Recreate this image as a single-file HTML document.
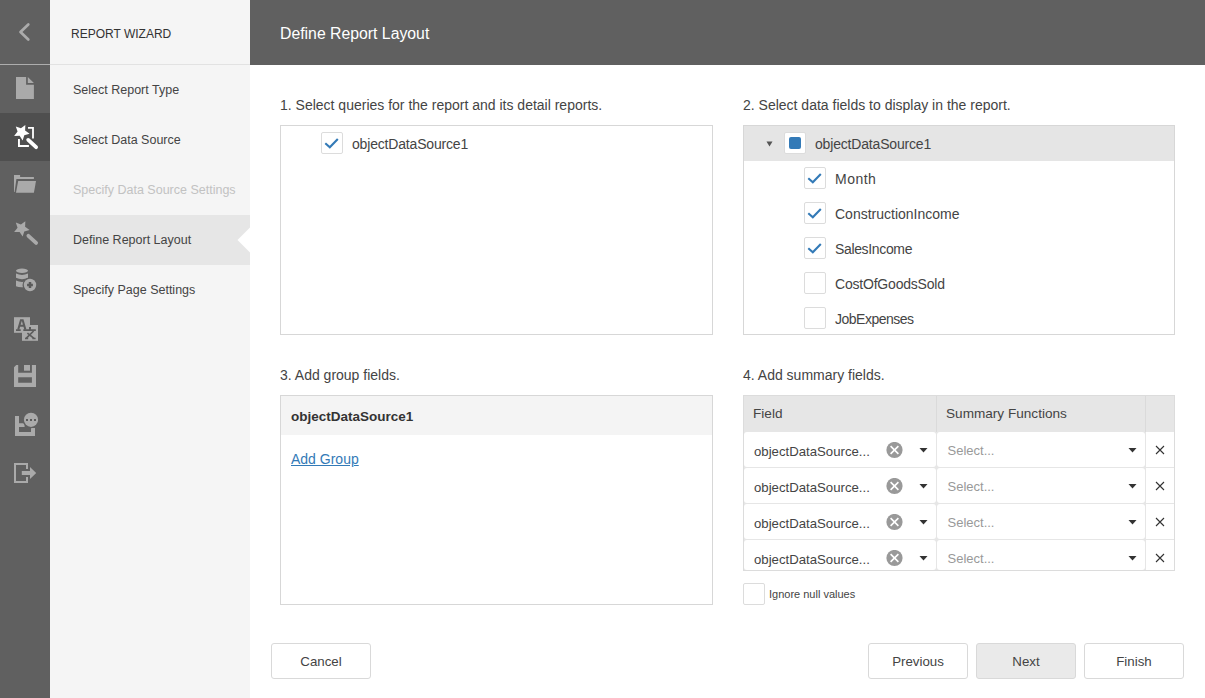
<!DOCTYPE html>
<html><head><meta charset="utf-8">
<style>
*{box-sizing:border-box;margin:0;padding:0}
html,body{width:1205px;height:698px;overflow:hidden;background:#fff;font-family:"Liberation Sans",sans-serif;color:#333}
.abs{position:absolute}
#bar{left:0;top:0;width:50px;height:698px;background:#606060}
#bar .sep{left:0;top:64px;width:50px;height:1px;background:#adadad}
#bar .act{left:0;top:113px;width:50px;height:48px;background:#4f4f4f}
#bar svg{position:absolute;left:0;top:0}
#nav{left:50px;top:0;width:200px;height:698px;background:#f5f5f5}
#nav .ttl{left:21px;top:27px;font-size:12px;line-height:14px;color:#333;white-space:nowrap}
#nav .sep{left:0;top:64px;width:200px;height:1px;background:#e2e2e2}
.item{position:absolute;left:0;width:200px;height:50px;font-size:12.5px;line-height:50px;padding-left:23px;white-space:nowrap;color:#444}
.item.dis{color:#c2c2c2}
.item.sel{background:#e6e6e6}
#hdr{left:250px;top:0;width:955px;height:65px;background:#606060}
#hdr .t{left:30px;top:25px;font-size:15.8px;line-height:18px;color:#fff;white-space:nowrap}
.lbl{position:absolute;font-size:14px;line-height:16px;color:#444;white-space:nowrap}
.box{position:absolute;border:1px solid #d7d7d7;background:#fff;overflow:hidden}
.cb{position:absolute;width:22px;height:22px;border:1px solid #dcdcdc;border-radius:2px;background:#fff}
.cb svg{position:absolute;left:-1px;top:-1px}
.txt{position:absolute;font-size:14px;line-height:16px;color:#444;white-space:nowrap}
.btn{position:absolute;top:643px;width:100px;height:36px;border:1px solid #d9d9d9;border-radius:3px;background:#fff;font-size:13.3px;text-align:center;line-height:35px;color:#444}
.row{position:absolute;left:0;width:430px;height:35px}
.tbl{position:absolute;left:743px;top:395px;width:432px;height:176px;border:1px solid #dcdcdc;background:#e6e6e6;overflow:hidden}
.th{position:absolute;top:0;height:36px;font-size:13.6px;line-height:16px;color:#444;white-space:nowrap}
.cell{position:absolute;height:35px;background:#fff;border-radius:3px}
.ctext{position:absolute;font-size:13.2px;line-height:16px;white-space:nowrap;color:#444}
</style></head><body>
<div id="bar" class="abs">
  <div class="abs sep"></div>
  <div class="abs act"></div>
  <svg width="50" height="698" viewBox="0 0 50 698">
    <!-- back chevron -->
    <path d="M28.3 24.5 L20.5 32 L28.3 39.5" fill="none" stroke="#ababab" stroke-width="2.7" stroke-linecap="round" stroke-linejoin="round"/>
    <!-- document -->
    <path d="M16 77 H26.1 V84.7 H33.9 V99 H16 Z" fill="#aaa"/>
    <path d="M27.8 77 L33.9 82.9 H27.8 Z" fill="#aaa"/>
    <!-- wizard (active) -->
    <path fill="#fff" d="M25.35 125.06 L25.10 130.55 L29.58 133.72 L24.28 135.18 L22.64 140.42 L19.62 135.83 L14.13 135.89 L17.56 131.61 L15.80 126.40 L20.94 128.34 Z"/>
    <path fill="#fff" d="M28 127 H33.9 V138.5 H32.1 V128.8 H28 Z"/>
    <path fill="#fff" d="M18 138.9 H19.9 V145 H28.9 V146.9 H18 Z"/>
    <path d="M28.2 139.9 L36.1 147.2" stroke="#fff" stroke-width="3.8" stroke-linecap="round"/>
    <!-- folder -->
    <path d="M14 175 H20.1 V177 H33.9 V178.9 H16.4 L14.6 192 H14 Z" fill="#aaa"/>
    <path d="M18.2 181 H36 L33.9 192.8 H16 Z" fill="#aaa"/>
    <!-- magic wand -->
    <path fill="#aaa" d="M25.35 221.26 L25.10 226.75 L29.58 229.92 L24.28 231.38 L22.64 236.62 L19.62 232.03 L14.13 232.09 L17.56 227.81 L15.80 222.60 L20.94 224.54 Z"/>
    <path d="M28.4 235.8 L36.1 242.9" stroke="#aaa" stroke-width="3.8" stroke-linecap="round"/>
    <!-- database add -->
    <ellipse cx="22" cy="270.8" rx="6" ry="2.2" fill="#aaa"/>
    <path d="M16 273.6 Q22 276.2 28 273.6 V277.8 Q22 280.6 16 277.8 Z" fill="#aaa"/>
    <path d="M16 280.6 Q20 282.4 24 281.8 L23.6 287.2 Q19 287.6 16 286.2 Z" fill="#aaa"/>
    <circle cx="30" cy="285" r="7.5" fill="#606060"/>
    <circle cx="30" cy="285" r="6.2" fill="#aaa"/>
    <path d="M27.1 285 H32.9 M30 282.1 V287.9" stroke="#5a5a5a" stroke-width="2.5"/>
    <!-- translate -->
    <rect x="14" y="317.2" width="16" height="15.6" fill="#aaa"/>
    <rect x="22" y="325" width="16" height="15.8" fill="#aaa"/>
    <path d="M18.2 329.6 L20.9 320.3 H22.7 L25.4 329.6 M19.5 325.8 H24.1" fill="none" stroke="#5c5c5c" stroke-width="2"/>
    <path fill="#5c5c5c" d="M16 329.2 H20.7 V330.9 H16 Z M23.3 329.2 H35.8 V330.9 H23.3 Z M29 327 H31 V329.2 H29 Z"/>
    <path d="M27.4 333.2 L34 338.4 M33.6 331 L26.1 338.4" fill="none" stroke="#5c5c5c" stroke-width="1.7"/>
    <path fill="#5c5c5c" d="M25 337.7 H28.2 V339.2 H25 Z M32.4 337.7 H35.6 V339.2 H32.4 Z"/>
    <!-- save -->
    <path fill="#aaa" fill-rule="evenodd" d="M16.3 365 H36 V387 H14 V367.3 Z M18.2 365 V372.7 H31.9 V365 Z M18.2 377.2 V382.8 H31.9 V377.2 Z"/>
    <rect x="24" y="365" width="6" height="5.7" fill="#aaa"/>
    <!-- save as / comment -->
    <path fill="#aaa" d="M15 416 H19 V423.3 H24.6 V427.1 H19 V431.9 H31 V428 H35 V436 H15 Z"/>
    <circle cx="31" cy="419.8" r="8.4" fill="#606060"/>
    <circle cx="31" cy="419.8" r="7.1" fill="#aaa"/>
    <path fill="#5a5a5a" d="M26 418.9 H28 V420.9 H26 Z M30 418.9 H32 V420.9 H30 Z M34 418.9 H36 V420.9 H34 Z"/>
    <!-- exit -->
    <path fill="#aaa" d="M14 463 H28 V469 H26 V465 H16 V481 H26 V477 H28 V483 H14 Z"/>
    <path fill="#aaa" d="M21.8 471 H30 V467 L36.2 473 L30 479 V475 H21.8 Z"/>
  </svg>
</div>
<div id="nav" class="abs">
  <div class="abs ttl">REPORT WIZARD</div>
  <div class="abs sep"></div>
  <div class="item" style="top:65px">Select Report Type</div>
  <div class="item" style="top:115px">Select Data Source</div>
  <div class="item dis" style="top:165px">Specify Data Source Settings</div>
  <div class="item sel" style="top:215px">Define Report Layout</div>
  <div class="item" style="top:265px">Specify Page Settings</div>
  <svg class="abs" style="left:187px;top:227px" width="13" height="26" viewBox="0 0 13 26"><path d="M13 0.5 L0.5 13 L13 25.5 Z" fill="#fff"/></svg>
</div>
<div id="hdr" class="abs"><div class="abs t">Define Report Layout</div></div>

<div class="lbl" style="left:280px;top:97px">1. Select queries for the report and its detail reports.</div>
<div class="box" style="left:280px;top:125px;width:433px;height:210px">
  <div class="cb" style="left:40px;top:6px"><svg width="22" height="22" viewBox="0 0 22 22"><path d="M4.3 11.3 L8.8 15.3 L16.8 7" fill="none" stroke="#337ab7" stroke-width="2.1"/></svg></div>
  <div class="txt" style="left:71px;top:10px;letter-spacing:-0.18px">objectDataSource1</div>
</div>

<div class="lbl" style="left:743px;top:97px">2. Select data fields to display in the report.</div>
<div class="box" style="left:743px;top:125px;width:432px;height:210px">
  <div class="row" style="top:0;background:#e5e5e5"></div>
  <svg class="abs" style="left:22px;top:15px" width="7" height="6" viewBox="0 0 7 6"><path d="M0.5 0.5 H6.5 L3.5 5.5 Z" fill="#555"/></svg>
  <div class="cb" style="left:40px;top:6px"><div class="abs" style="left:4px;top:4px;width:12px;height:12px;background:#337ab7;border-radius:2px"></div></div>
  <div class="txt" style="left:71px;top:10px;letter-spacing:-0.18px">objectDataSource1</div>

  <div class="cb" style="left:60px;top:41px"><svg width="22" height="22" viewBox="0 0 22 22"><path d="M4.3 11.3 L8.8 15.3 L16.8 7" fill="none" stroke="#337ab7" stroke-width="2.1"/></svg></div>
  <div class="txt" style="left:91px;top:45px;letter-spacing:0.5px">Month</div>
  <div class="cb" style="left:60px;top:76px"><svg width="22" height="22" viewBox="0 0 22 22"><path d="M4.3 11.3 L8.8 15.3 L16.8 7" fill="none" stroke="#337ab7" stroke-width="2.1"/></svg></div>
  <div class="txt" style="left:91px;top:80px">ConstructionIncome</div>
  <div class="cb" style="left:60px;top:111px"><svg width="22" height="22" viewBox="0 0 22 22"><path d="M4.3 11.3 L8.8 15.3 L16.8 7" fill="none" stroke="#337ab7" stroke-width="2.1"/></svg></div>
  <div class="txt" style="left:91px;top:115px;letter-spacing:-0.35px">SalesIncome</div>
  <div class="cb" style="left:60px;top:146px"></div>
  <div class="txt" style="left:91px;top:150px;letter-spacing:-0.2px">CostOfGoodsSold</div>
  <div class="cb" style="left:60px;top:181px"></div>
  <div class="txt" style="left:91px;top:185px;letter-spacing:-0.5px">JobExpenses</div>
</div>

<div class="lbl" style="left:280px;top:367px">3. Add group fields.</div>
<div class="box" style="left:280px;top:395px;width:433px;height:210px">
  <div class="row" style="top:0;height:39px;width:431px;background:#f4f4f4"></div>
  <div class="txt" style="left:10px;top:12.5px;font-weight:bold;font-size:13.5px;color:#333">objectDataSource1</div>
  <div class="txt" style="left:10px;top:55px;color:#337ab7;text-decoration:underline">Add Group</div>
</div>

<div class="lbl" style="left:743px;top:367px">4. Add summary fields.</div>
<div class="tbl">
  <div class="th" style="left:9px;top:10px">Field</div>
  <div class="th" style="left:202px;top:10px">Summary Functions</div>
  <div class="abs" style="left:192px;top:0;width:1px;height:36px;background:#dadada"></div>
  <div class="abs" style="left:401px;top:0;width:1px;height:36px;background:#dadada"></div>
  <!-- rows -->
  <div class="cell" style="left:0;top:36px;width:192px;height:35px"></div>
  <div class="ctext" style="left:10px;top:48px">objectDataSource...</div>
  <svg class="abs" style="left:142px;top:46px" width="17" height="17" viewBox="0 0 17 17"><circle cx="8.5" cy="8" r="8.1" fill="#999"/><path d="M4.6 4.1 L12.4 11.9 M12.4 4.1 L4.6 11.9" stroke="#fff" stroke-width="1.6"/></svg>
  <svg class="abs" style="left:175px;top:52px" width="9" height="5" viewBox="0 0 9 5"><path d="M0.5 0 H8.5 L4.5 4.5 Z" fill="#333"/></svg>
  <div class="cell" style="left:193px;top:36px;width:208px;height:35px"></div>
  <div class="ctext" style="left:203.5px;top:47px;color:#999;font-size:13px">Select...</div>
  <svg class="abs" style="left:383.5px;top:52px" width="9" height="5" viewBox="0 0 9 5"><path d="M0.5 0 H8.5 L4.5 4.5 Z" fill="#333"/></svg>
  <div class="abs" style="left:402px;top:36px;width:28px;height:35px;background:#fff"></div>
  <svg class="abs" style="left:411px;top:49px" width="10" height="10" viewBox="0 0 10 10"><path d="M1 1 L9 9 M9 1 L1 9" stroke="#333" stroke-width="1.1"/></svg>
  <div class="cell" style="left:0;top:72px;width:192px;height:35px"></div>
  <div class="ctext" style="left:10px;top:84px">objectDataSource...</div>
  <svg class="abs" style="left:142px;top:82px" width="17" height="17" viewBox="0 0 17 17"><circle cx="8.5" cy="8" r="8.1" fill="#999"/><path d="M4.6 4.1 L12.4 11.9 M12.4 4.1 L4.6 11.9" stroke="#fff" stroke-width="1.6"/></svg>
  <svg class="abs" style="left:175px;top:88px" width="9" height="5" viewBox="0 0 9 5"><path d="M0.5 0 H8.5 L4.5 4.5 Z" fill="#333"/></svg>
  <div class="cell" style="left:193px;top:72px;width:208px;height:35px"></div>
  <div class="ctext" style="left:203.5px;top:83px;color:#999;font-size:13px">Select...</div>
  <svg class="abs" style="left:383.5px;top:88px" width="9" height="5" viewBox="0 0 9 5"><path d="M0.5 0 H8.5 L4.5 4.5 Z" fill="#333"/></svg>
  <div class="abs" style="left:402px;top:72px;width:28px;height:35px;background:#fff"></div>
  <svg class="abs" style="left:411px;top:85px" width="10" height="10" viewBox="0 0 10 10"><path d="M1 1 L9 9 M9 1 L1 9" stroke="#333" stroke-width="1.1"/></svg>
  <div class="cell" style="left:0;top:108px;width:192px;height:35px"></div>
  <div class="ctext" style="left:10px;top:120px">objectDataSource...</div>
  <svg class="abs" style="left:142px;top:118px" width="17" height="17" viewBox="0 0 17 17"><circle cx="8.5" cy="8" r="8.1" fill="#999"/><path d="M4.6 4.1 L12.4 11.9 M12.4 4.1 L4.6 11.9" stroke="#fff" stroke-width="1.6"/></svg>
  <svg class="abs" style="left:175px;top:124px" width="9" height="5" viewBox="0 0 9 5"><path d="M0.5 0 H8.5 L4.5 4.5 Z" fill="#333"/></svg>
  <div class="cell" style="left:193px;top:108px;width:208px;height:35px"></div>
  <div class="ctext" style="left:203.5px;top:119px;color:#999;font-size:13px">Select...</div>
  <svg class="abs" style="left:383.5px;top:124px" width="9" height="5" viewBox="0 0 9 5"><path d="M0.5 0 H8.5 L4.5 4.5 Z" fill="#333"/></svg>
  <div class="abs" style="left:402px;top:108px;width:28px;height:35px;background:#fff"></div>
  <svg class="abs" style="left:411px;top:121px" width="10" height="10" viewBox="0 0 10 10"><path d="M1 1 L9 9 M9 1 L1 9" stroke="#333" stroke-width="1.1"/></svg>
  <div class="cell" style="left:0;top:144px;width:192px;height:30px"></div>
  <div class="ctext" style="left:10px;top:156px">objectDataSource...</div>
  <svg class="abs" style="left:142px;top:154px" width="17" height="17" viewBox="0 0 17 17"><circle cx="8.5" cy="8" r="8.1" fill="#999"/><path d="M4.6 4.1 L12.4 11.9 M12.4 4.1 L4.6 11.9" stroke="#fff" stroke-width="1.6"/></svg>
  <svg class="abs" style="left:175px;top:160px" width="9" height="5" viewBox="0 0 9 5"><path d="M0.5 0 H8.5 L4.5 4.5 Z" fill="#333"/></svg>
  <div class="cell" style="left:193px;top:144px;width:208px;height:30px"></div>
  <div class="ctext" style="left:203.5px;top:155px;color:#999;font-size:13px">Select...</div>
  <svg class="abs" style="left:383.5px;top:160px" width="9" height="5" viewBox="0 0 9 5"><path d="M0.5 0 H8.5 L4.5 4.5 Z" fill="#333"/></svg>
  <div class="abs" style="left:402px;top:144px;width:28px;height:30px;background:#fff"></div>
  <svg class="abs" style="left:411px;top:157px" width="10" height="10" viewBox="0 0 10 10"><path d="M1 1 L9 9 M9 1 L1 9" stroke="#333" stroke-width="1.1"/></svg>
</div>
<div class="cb" style="left:743px;top:583px"></div>
<div class="txt" style="left:769px;top:588px;font-size:11px;line-height:13px">Ignore null values</div>

<div class="btn" style="left:271px">Cancel</div>
<div class="btn" style="left:868px">Previous</div>
<div class="btn" style="left:976px;background:#eaeaea">Next</div>
<div class="btn" style="left:1084px">Finish</div>
</body></html>
